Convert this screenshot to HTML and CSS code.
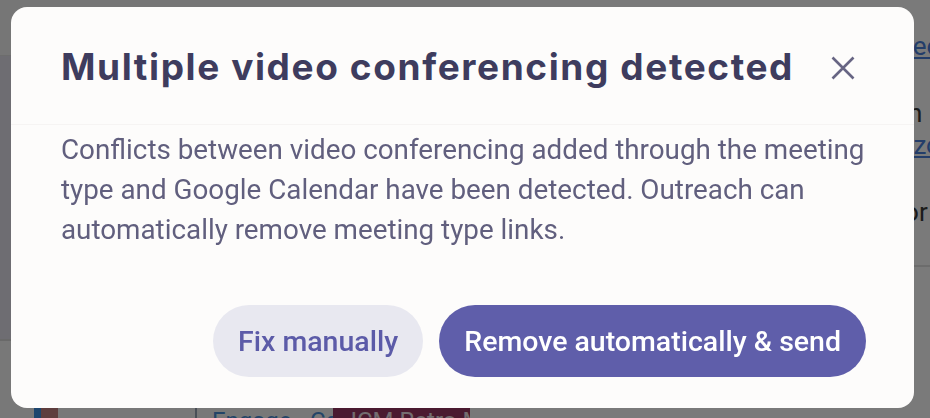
FILE: index.html
```html
<!doctype html>
<html lang="en">
<head>
    <meta charset="UTF-8">
    <meta name="viewport" content="width=device-width, initial-scale=1.0">
    <title>Multiple video conferencing detected</title>
    <link rel="stylesheet" href="styles.css">
</head>
<body>
<div class="page">
    <div class="board">
        <div class="board-head"></div>
        <div class="board-main"></div>
        <div class="board-foot">
            <div class="card-row">
                <span class="tag tag-blue"></span>
                <span class="tag tag-brown"></span>
                <span class="card-title">Engage - Cadence sync</span>
                <span class="card-event">ICM Retro Meeting</span>
            </div>
        </div>
    </div>
    <div class="details">
        <a class="details-link" href="#">Meet</a>
        <p class="details-text gap">On</p>
        <a class="details-link" href="#">A zoom</a>
        <p class="details-text gap">For</p>
        <div class="details-divider"></div>
    </div>
</div>

<div class="backdrop"></div>

<div class="modal" role="dialog" aria-labelledby="modal-title">
    <div class="modal-head">
        <h2 class="modal-title" id="modal-title">Multiple video conferencing detected</h2>
        <button class="modal-close" aria-label="Close">
            <svg viewBox="0 0 24 24" width="24" height="24">
                <path d="M1.5 1.5l21 21M22.5 1.5l-21 21" stroke="currentColor" stroke-width="2.6" fill="none"/>
            </svg>
        </button>
    </div>
    <div class="modal-body">
        Conflicts between video conferencing added through the meeting type and Google Calendar have been detected. Outreach can automatically remove meeting type links.
    </div>
    <div class="modal-foot">
        <button class="btn btn-light">Fix manually</button>
        <button class="btn btn-primary">Remove automatically &amp; send</button>
    </div>
</div>
</body>
</html>
```

FILE: styles.css
```css
html, body {
    margin: 0;
    height: 100%;
    overflow: hidden;
}

body {
    font-family: Roboto, "Liberation Sans", sans-serif;
}

/* page behind the dialog */
.page {
    display: flex;
    height: 100%;
}

.board {
    width: 490px;
    display: flex;
    flex-direction: column;
    background: #f8f8f8;
}

.board-head {
    flex: none;
    height: 55px;
    background: #f6f6f6;
    border-bottom: 1px solid #e4e4e4;
}

.board-main {
    flex: none;
    height: 283px;
    background: #e6e3ef;
    border-bottom: 2px solid #dcdcdc;
}

.board-foot {
    flex: none;
    padding-top: 60px;
    background: #fafafa;
}

.card-row {
    display: flex;
    height: 40px;
    padding-left: 34px;
    padding-right: 20px;
    align-items: stretch;
}

.tag {
    width: 7px;
}

.tag-blue {
    background: #3d92e6;
}

.tag-brown {
    width: 17px;
    background: #c48383;
}

.card-title {
    width: 122px;
    margin-left: 137px;
    padding-left: 15px;
    border-left: 2px solid #9aa6b6;
    font-size: 24px;
    line-height: 40px;
    color: #4a8fd8;
    white-space: nowrap;
    overflow: hidden;
}

.card-event {
    width: 120px;
    padding-left: 17px;
    background: #9c3764;
    font-size: 24px;
    line-height: 40px;
    color: #f2e3ea;
    white-space: nowrap;
    overflow: hidden;
}

.details {
    flex: 1;
    background: #fff;
    padding: 30px 0 0 400px;
    font-size: 26px;
    line-height: 32px;
    color: #3a3a3a;
}

.details-link {
    display: block;
    color: #4a7fdc;
    white-space: nowrap;
}

.details-text {
    margin: 0;
    white-space: nowrap;
}

.details-text.gap {
    margin-top: 35px;
}

.details-divider {
    margin-top: 37px;
    border-top: 2px solid #e2e2e2;
    margin-left: -400px;
}

/* dialog */
.backdrop {
    position: fixed;
    inset: 0;
    background: rgba(0, 0, 0, 0.52);
}

.modal {
    position: fixed;
    top: 7px;
    left: 11px;
    width: 903px;
    height: 401px;
    box-sizing: border-box;
    display: flex;
    flex-direction: column;
    background: #fdfcfb;
    border-radius: 16px;
}

.modal-head {
    height: 118px;
    box-sizing: border-box;
    padding: 4px 59px 0 50px;
    display: flex;
    align-items: center;
    justify-content: space-between;
    border-bottom: 1px solid #f6f4f3;
}

.modal-title {
    margin: 0;
    font-family: Inter, "Liberation Sans", sans-serif;
    font-weight: 700;
    font-size: 37px;
    letter-spacing: 1.6px;
    line-height: 1.21;
    color: #3e3c5e;
    white-space: nowrap;
}

.modal-close {
    width: 24px;
    height: 24px;
    padding: 0;
    border: 0;
    background: none;
    color: #676583;
    cursor: pointer;
}

.modal-close svg {
    display: block;
}

.modal-body {
    padding: 5px 40px 0 50px;
    font-size: 27.8px;
    line-height: 40px;
    color: #615f7e;
}

.modal-foot {
    margin-top: auto;
    padding: 0 48px 31px;
    display: flex;
    justify-content: flex-end;
    gap: 16px;
}

.btn {
    height: 72px;
    padding: 0 25px;
    border: 0;
    border-radius: 36px;
    font-family: Roboto, "Liberation Sans", sans-serif;
    font-weight: 500;
    font-size: 28.5px;
    cursor: pointer;
}

.btn-light {
    background: #e8e8f0;
    color: #5c5ba8;
}

.btn-primary {
    background: #5f5eaa;
    color: #fff;
}
```
